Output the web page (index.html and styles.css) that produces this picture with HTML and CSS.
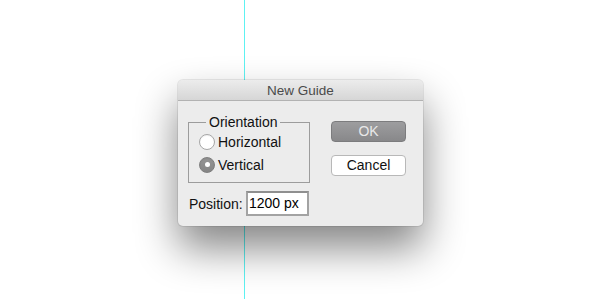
FILE: index.html
```html
<!DOCTYPE html>
<html>
<head>
<meta charset="utf-8">
<link rel="stylesheet" href="styles.css">
</head>
<body>
<div class="guide"></div>
<div class="stage">
  <div class="dialog">
    <div class="titlebar">New Guide</div>
    <div class="content">
      <div class="top-row">
        <fieldset class="orient">
          <legend>Orientation</legend>
          <div class="radio-row"><span class="radio"></span><span>Horizontal</span></div>
          <div class="radio-row"><span class="radio checked"></span><span>Vertical</span></div>
        </fieldset>
        <div class="buttons">
          <div class="btn btn-ok">OK</div>
          <div class="btn btn-cancel">Cancel</div>
        </div>
      </div>
      <div class="pos-row">
        <span class="pos-label">Position:</span>
        <div class="pos-input">1200 px</div>
      </div>
    </div>
  </div>
</div>
</body>
</html>
```
FILE: styles.css
```css
html, body {
  margin: 0;
  padding: 0;
  background: #ffffff;
  width: 600px;
  height: 299px;
  overflow: hidden;
  font-family: "Liberation Sans", Arial, Helvetica, sans-serif;
}
.guide {
  position: absolute;
  left: 244px;
  top: 0;
  width: 1px;
  height: 299px;
  background: #5ef2f2;
}
.stage {
  display: flex;
  justify-content: center;
  padding-top: 80px;
  padding-left: 1px;
}
.dialog {
  position: relative;
  width: 245px;
  height: 146px;
  background: #ececec;
  border-radius: 5px;
  box-shadow: 0 22px 42px rgba(0,0,0,0.48), 0 0 0 1px rgba(0,0,0,0.08);
  display: flex;
  flex-direction: column;
}
.titlebar {
  height: 20px;
  line-height: 21px;
  text-align: center;
  font-size: 13.5px;
  color: #4a4a4a;
  background: linear-gradient(#ececec, #d6d6d6);
  border-bottom: 1px solid #b2b2b2;
  border-radius: 5px 5px 0 0;
}
.content {
  padding: 13px 17px 10px 10px;
  flex: 1;
  display: flex;
  flex-direction: column;
}
.top-row {
  display: flex;
  align-items: flex-start;
}
.orient {
  margin: 0;
  width: 100px;
  padding: 0 10px 6px 10px;
  border: 1px solid #9c9c9c;
  box-sizing: content-box;
  font-size: 14px;
}
.orient legend {
  padding: 0 3px;
  margin-left: 7px;
  line-height: 16px;
  font-size: 14px;
  color: #111;
}
.radio-row {
  display: flex;
  align-items: center;
  height: 23px;
  font-size: 14px;
  color: #111;
}
.radio {
  width: 14px;
  height: 14px;
  border-radius: 50%;
  border: 1px solid #a6a6a6;
  background: #ffffff;
  margin-right: 3px;
  display: flex;
  align-items: center;
  justify-content: center;
  box-shadow: inset 0 1px 1px rgba(0,0,0,0.06);
}
.radio.checked {
  background: linear-gradient(#959595, #858585);
  border-color: #7f7f7f;
}
.radio.checked::after {
  content: "";
  width: 5px;
  height: 5px;
  border-radius: 50%;
  background: #ffffff;
}
.buttons {
  margin-left: 21px;
  margin-top: 7px;
  display: flex;
  flex-direction: column;
  gap: 13px;
}
.btn {
  width: 73px;
  text-align: center;
  font-size: 14px;
  border-radius: 4px;
}
.btn-ok {
  height: 19px;
  line-height: 19px;
  background: linear-gradient(#9d9d9f, #88888a);
  border: 1px solid #7c7c7e;
  color: #e8e8e8;
}
.btn-cancel {
  height: 19px;
  line-height: 19px;
  background: #ffffff;
  border: 1px solid #b8b8b8;
  color: #111;
}
.pos-row {
  display: flex;
  align-items: center;
  margin-top: 8px;
  padding-left: 1px;
}
.pos-label {
  font-size: 14px;
  color: #111;
  width: 57px;
}
.pos-input {
  width: 58px;
  height: 21px;
  line-height: 21px;
  border: 2px solid #a3a3a3;
  border-top-color: #8f8f8f;
  background: #ffffff;
  font-size: 14px;
  color: #000;
  padding-left: 1px;
  margin-left: 0;
}
```
